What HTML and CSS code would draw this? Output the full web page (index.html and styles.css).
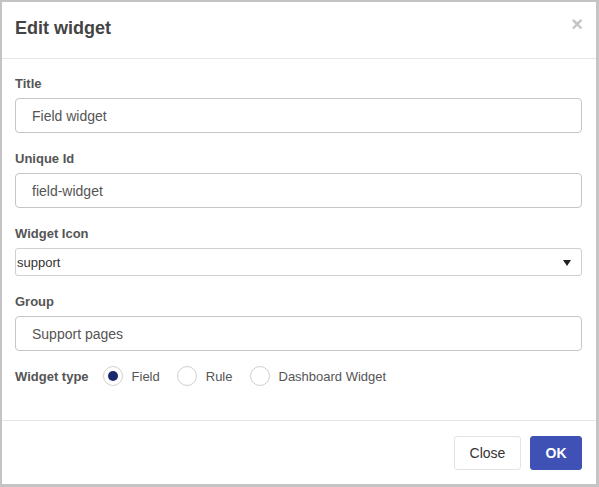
FILE: index.html
```html
<!DOCTYPE html>
<html>
<head>
<meta charset="utf-8">
<link rel="stylesheet" href="styles.css">
</head>
<body>
<div class="dialog">
  <div class="header">
    <h1 class="title">Edit widget</h1>
    <span class="close-x">&times;</span>
  </div>
  <div class="body">
    <div class="group">
      <label class="label">Title</label>
      <div class="input">Field widget</div>
    </div>
    <div class="group">
      <label class="label">Unique Id</label>
      <div class="input">field-widget</div>
    </div>
    <div class="group">
      <label class="label">Widget Icon</label>
      <div class="select">support<span class="arrow"></span></div>
    </div>
    <div class="group group-last">
      <label class="label">Group</label>
      <div class="input">Support pages</div>
    </div>
    <div class="radio-row">
      <span class="label inline">Widget type</span>
      <span class="radio checked"></span><span class="rtext">Field</span>
      <span class="radio"></span><span class="rtext">Rule</span>
      <span class="radio"></span><span class="rtext">Dashboard Widget</span>
    </div>
  </div>
  <div class="footer">
    <button class="btn btn-close">Close</button>
    <button class="btn btn-ok">OK</button>
  </div>
</div>
</body>
</html>
```
FILE: styles.css
```css
html, body {
  margin: 0;
  padding: 0;
  height: 100%;
}
body {
  background: #c4c4c4;
  font-family: "Liberation Sans", Arial, sans-serif;
  padding: 2px 3px 3px 2px;
  box-sizing: border-box;
}
.dialog {
  background: #fff;
  height: 100%;
  display: flex;
  flex-direction: column;
}
.header {
  height: 56px;
  border-bottom: 1px solid #e5e5e5;
  display: flex;
  align-items: center;
  justify-content: space-between;
  padding: 0 13px 0 13px;
  flex: none;
}
.title {
  margin: 0;
  font-size: 18px;
  font-weight: bold;
  color: #444;
  position: relative;
  top: -2px;
}
.close-x {
  color: #c4c4c4;
  font-size: 20px;
  font-weight: bold;
  line-height: 1;
  position: relative;
  top: -6px;
}
.body {
  flex: 1;
  padding: 17px 14px 0 13px;
}
.group {
  margin-bottom: 18px;
}
.group-last {
  margin-bottom: 15px;
}
.label {
  display: block;
  font-size: 13px;
  line-height: 15px;
  font-weight: bold;
  color: #555;
  margin-bottom: 7px;
}
.label.inline {
  display: inline-block;
  margin: 0 14px 0 0;
}
.input {
  height: 35px;
  box-sizing: border-box;
  border: 1px solid #c6c6c6;
  border-radius: 4px;
  padding: 0 16px;
  display: flex;
  align-items: center;
  font-size: 14px;
  color: #555;
}
.select {
  position: relative;
  height: 28px;
  box-sizing: border-box;
  border: 1px solid #cfcfcf;
  border-radius: 3px;
  padding: 0 0 0 1px;
  display: flex;
  align-items: center;
  font-size: 13px;
  color: #333;
}
.arrow {
  position: absolute;
  right: 10px;
  top: 11px;
  width: 0;
  height: 0;
  border-left: 4px solid transparent;
  border-right: 4px solid transparent;
  border-top: 6px solid #222;
}
.radio-row {
  display: flex;
  align-items: center;
  height: 20px;
}
.radio {
  width: 20px;
  height: 20px;
  box-sizing: border-box;
  border: 1px solid #d0d0d0;
  border-radius: 50%;
  display: inline-flex;
  align-items: center;
  justify-content: center;
  flex: none;
}
.radio.checked::after {
  content: "";
  width: 10px;
  height: 10px;
  border-radius: 50%;
  background: #1c2a6b;
}
.rtext {
  font-size: 13px;
  color: #555;
  margin: 0 17px 0 9px;
}
.footer {
  flex: none;
  border-top: 1px solid #e5e5e5;
  display: flex;
  justify-content: flex-end;
  gap: 9px;
  padding: 15px 14px 14px 0;
}
.btn {
  height: 34px;
  font-family: "Liberation Sans", Arial, sans-serif;
  font-size: 14px;
  border-radius: 3px;
  cursor: pointer;
}
.btn-close {
  width: 67px;
  background: #fff;
  border: 1px solid #e3e3e3;
  color: #333;
}
.btn-ok {
  width: 52px;
  background: #3f51b5;
  border: 1px solid #3f51b5;
  color: #fff;
  font-weight: bold;
}
```
